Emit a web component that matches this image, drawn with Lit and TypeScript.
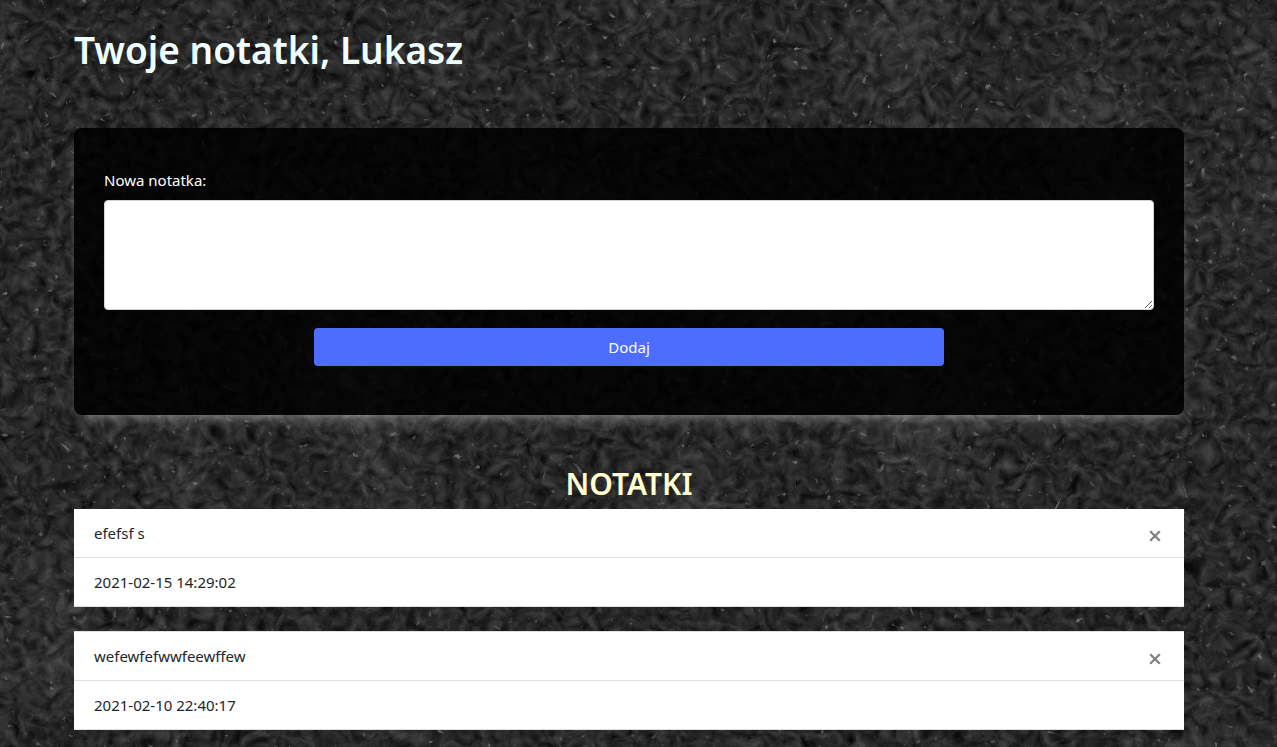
import { LitElement, html, css } from "lit";
import { customElement, property, state } from "lit/decorators.js";

interface Note {
  id: number;
  text: string;
  created: string;
}

@customElement("stone-backdrop")
class StoneBackdrop extends LitElement {
  static styles = css`
    :host {
      display: block;
      overflow: hidden;
      background: #232323;
    }
    .texture {
      display: block;
      width: 100%;
      height: 100%;
    }
  `;

  render() {
    return html`
      <svg class="texture" aria-hidden="true">
        <filter id="stone" x="-5%" y="-5%" width="110%" height="110%" color-interpolation-filters="sRGB">
          <feTurbulence type="fractalNoise" baseFrequency="0.03" numOctaves="2" seed="3" result="warp" />
          <feTurbulence type="fractalNoise" baseFrequency="0.09 0.1" numOctaves="4" seed="8" result="fine" />
          <feDisplacementMap in="fine" in2="warp" scale="24" xChannelSelector="R" yChannelSelector="G" result="rough" />
          <feColorMatrix in="rough" type="matrix" result="grain"
            values="0.22 0.2 0 0 -0.06  0.22 0.2 0 0 -0.06  0.22 0.2 0 0 -0.06  0 0 0 0 1" />
          <feTurbulence type="fractalNoise" baseFrequency="0.007" numOctaves="4" seed="21" result="coarse" />
          <feColorMatrix in="coarse" type="matrix" result="clouds"
            values="0.22 0 0 0 -0.12  0.22 0 0 0 -0.12  0.22 0 0 0 -0.12  0 0 0 0 1" />
          <feComposite in="grain" in2="clouds" operator="arithmetic" k2="1" k3="1" result="stoneBase" />
          <feTurbulence type="fractalNoise" baseFrequency="0.13" numOctaves="2" seed="44" result="dots" />
          <feDisplacementMap in="dots" in2="warp" scale="24" xChannelSelector="G" yChannelSelector="R" result="scattered" />
          <feColorMatrix in="scattered" type="matrix" result="specks"
            values="0 0 0 0 0.5  0 0 0 0 0.5  0 0 0 0 0.5  0 5 0 0 -3.6" />
          <feTurbulence type="turbulence" baseFrequency="0.023" numOctaves="4" seed="5" result="veins" />
          <feColorMatrix in="veins" type="matrix" result="cracks"
            values="0 0 0 0 0.08  0 0 0 0 0.08  0 0 0 0 0.08  -8 0 0 0 0.6" />
          <feMerge result="surface">
            <feMergeNode in="stoneBase" />
            <feMergeNode in="cracks" />
            <feMergeNode in="specks" />
          </feMerge>
        </filter>
        <rect width="100%" height="100%" filter="url(#stone)" />
      </svg>
    `;
  }
}

@customElement("note-card")
class NoteCard extends LitElement {
  @property({ attribute: false }) note!: Note;

  static styles = css`
    :host {
      display: block;
      background: #fff;
      color: #212529;
    }
    .row {
      display: flex;
      justify-content: space-between;
      align-items: center;
      padding: 12px 20px;
      border-bottom: 1px solid #dfdfdf;
      line-height: 24px;
    }
    .close {
      display: flex;
      margin: 6px 0 0;
      padding: 0 3px;
      border: 0;
      background: none;
      color: #808080;
      cursor: pointer;
    }
    .close:hover {
      color: #404040;
    }
  `;

  private remove() {
    this.dispatchEvent(new CustomEvent("note-remove", { detail: this.note.id }));
  }

  render() {
    return html`
      <div class="row">
        <span>${this.note.text}</span>
        <button class="close" type="button" aria-label="Usuń" @click=${this.remove}>
          <svg width="12" height="12" viewBox="0 0 12 12" fill="none" stroke="currentColor" stroke-width="2.3">
            <path d="M1.2 1.2L10.8 10.8M10.8 1.2L1.2 10.8" />
          </svg>
        </button>
      </div>
      <div class="row"><time>${this.note.created}</time></div>
    `;
  }
}

@customElement("app-root")
class AppRoot extends LitElement {
  @state() private notes: Note[] = [
    { id: 1, text: "efefsf s", created: "2021-02-15 14:29:02" },
    { id: 2, text: "wefewfefwwfeewffew", created: "2021-02-10 22:40:17" },
  ];

  static styles = css`
    :host {
      display: block;
      position: relative;
      min-height: 100vh;
      box-sizing: border-box;
      padding: 26px 34px 17px 15px;
      font-family: "Segoe UI", "Noto Sans", "Open Sans", sans-serif;
      font-size: 15px;
      line-height: 24px;
    }
    .backdrop {
      position: absolute;
      inset: 0;
    }
    .container {
      position: relative;
      max-width: 1110px;
      margin: 0 auto;
    }
    .title {
      margin: 0 0 54px;
      color: #f0ffff;
      font-size: 37px;
      font-weight: 600;
      line-height: 48px;
    }
    .panel {
      display: flex;
      flex-direction: column;
      padding: 40px 30px 49px;
      border-radius: 8px;
      background: rgba(0, 0, 0, 0.85);
      box-shadow: 0 10px 16px -8px rgba(255, 255, 255, 0.35), 0 4px 8px -3px rgba(255, 255, 255, 0.2);
    }
    .label {
      margin-bottom: 8px;
      color: #fff;
    }
    .text {
      box-sizing: border-box;
      width: 100%;
      height: 110px;
      margin: 0;
      padding: 6px 12px;
      border: 1px solid #ced4da;
      border-radius: 4px;
      background: #fff;
      color: #495057;
      font: inherit;
      resize: vertical;
    }
    .submit {
      align-self: center;
      width: 60%;
      margin-top: 18px;
      padding: 7px 12px;
      border: 0;
      border-radius: 4px;
      background: #4d6dff;
      color: #fff;
      font: inherit;
      cursor: pointer;
    }
    .heading {
      margin: 50px 0 6px;
      color: #ffffd2;
      font-size: 30px;
      font-weight: 600;
      line-height: 38px;
      text-align: center;
    }
    .list {
      display: grid;
      gap: 24px;
      margin: 0;
      padding: 0;
      list-style: none;
    }
    .item + .item {
      border-top: 1px solid #dfdfdf;
    }
  `;

  private add(event: Event) {
    event.preventDefault();
    const field = this.renderRoot.querySelector("textarea")!;
    const text = field.value.trim();
    if (!text) return;
    const created = new Date().toISOString().slice(0, 19).replace("T", " ");
    this.notes = [{ id: Date.now(), text, created }, ...this.notes];
    field.value = "";
  }

  private remove(event: CustomEvent<number>) {
    this.notes = this.notes.filter((note) => note.id !== event.detail);
  }

  render() {
    return html`
      <stone-backdrop class="backdrop"></stone-backdrop>
      <main class="container">
        <h1 class="title">Twoje notatki, Lukasz</h1>
        <form class="panel" @submit=${this.add}>
          <label class="label" for="note">Nowa notatka:</label>
          <textarea class="text" id="note" rows="4"></textarea>
          <button class="submit" type="submit">Dodaj</button>
        </form>
        <h2 class="heading">NOTATKI</h2>
        <ul class="list">
          ${this.notes.map(
            (note) => html`<li class="item"><note-card .note=${note} @note-remove=${this.remove}></note-card></li>`
          )}
        </ul>
      </main>
    `;
  }
}
